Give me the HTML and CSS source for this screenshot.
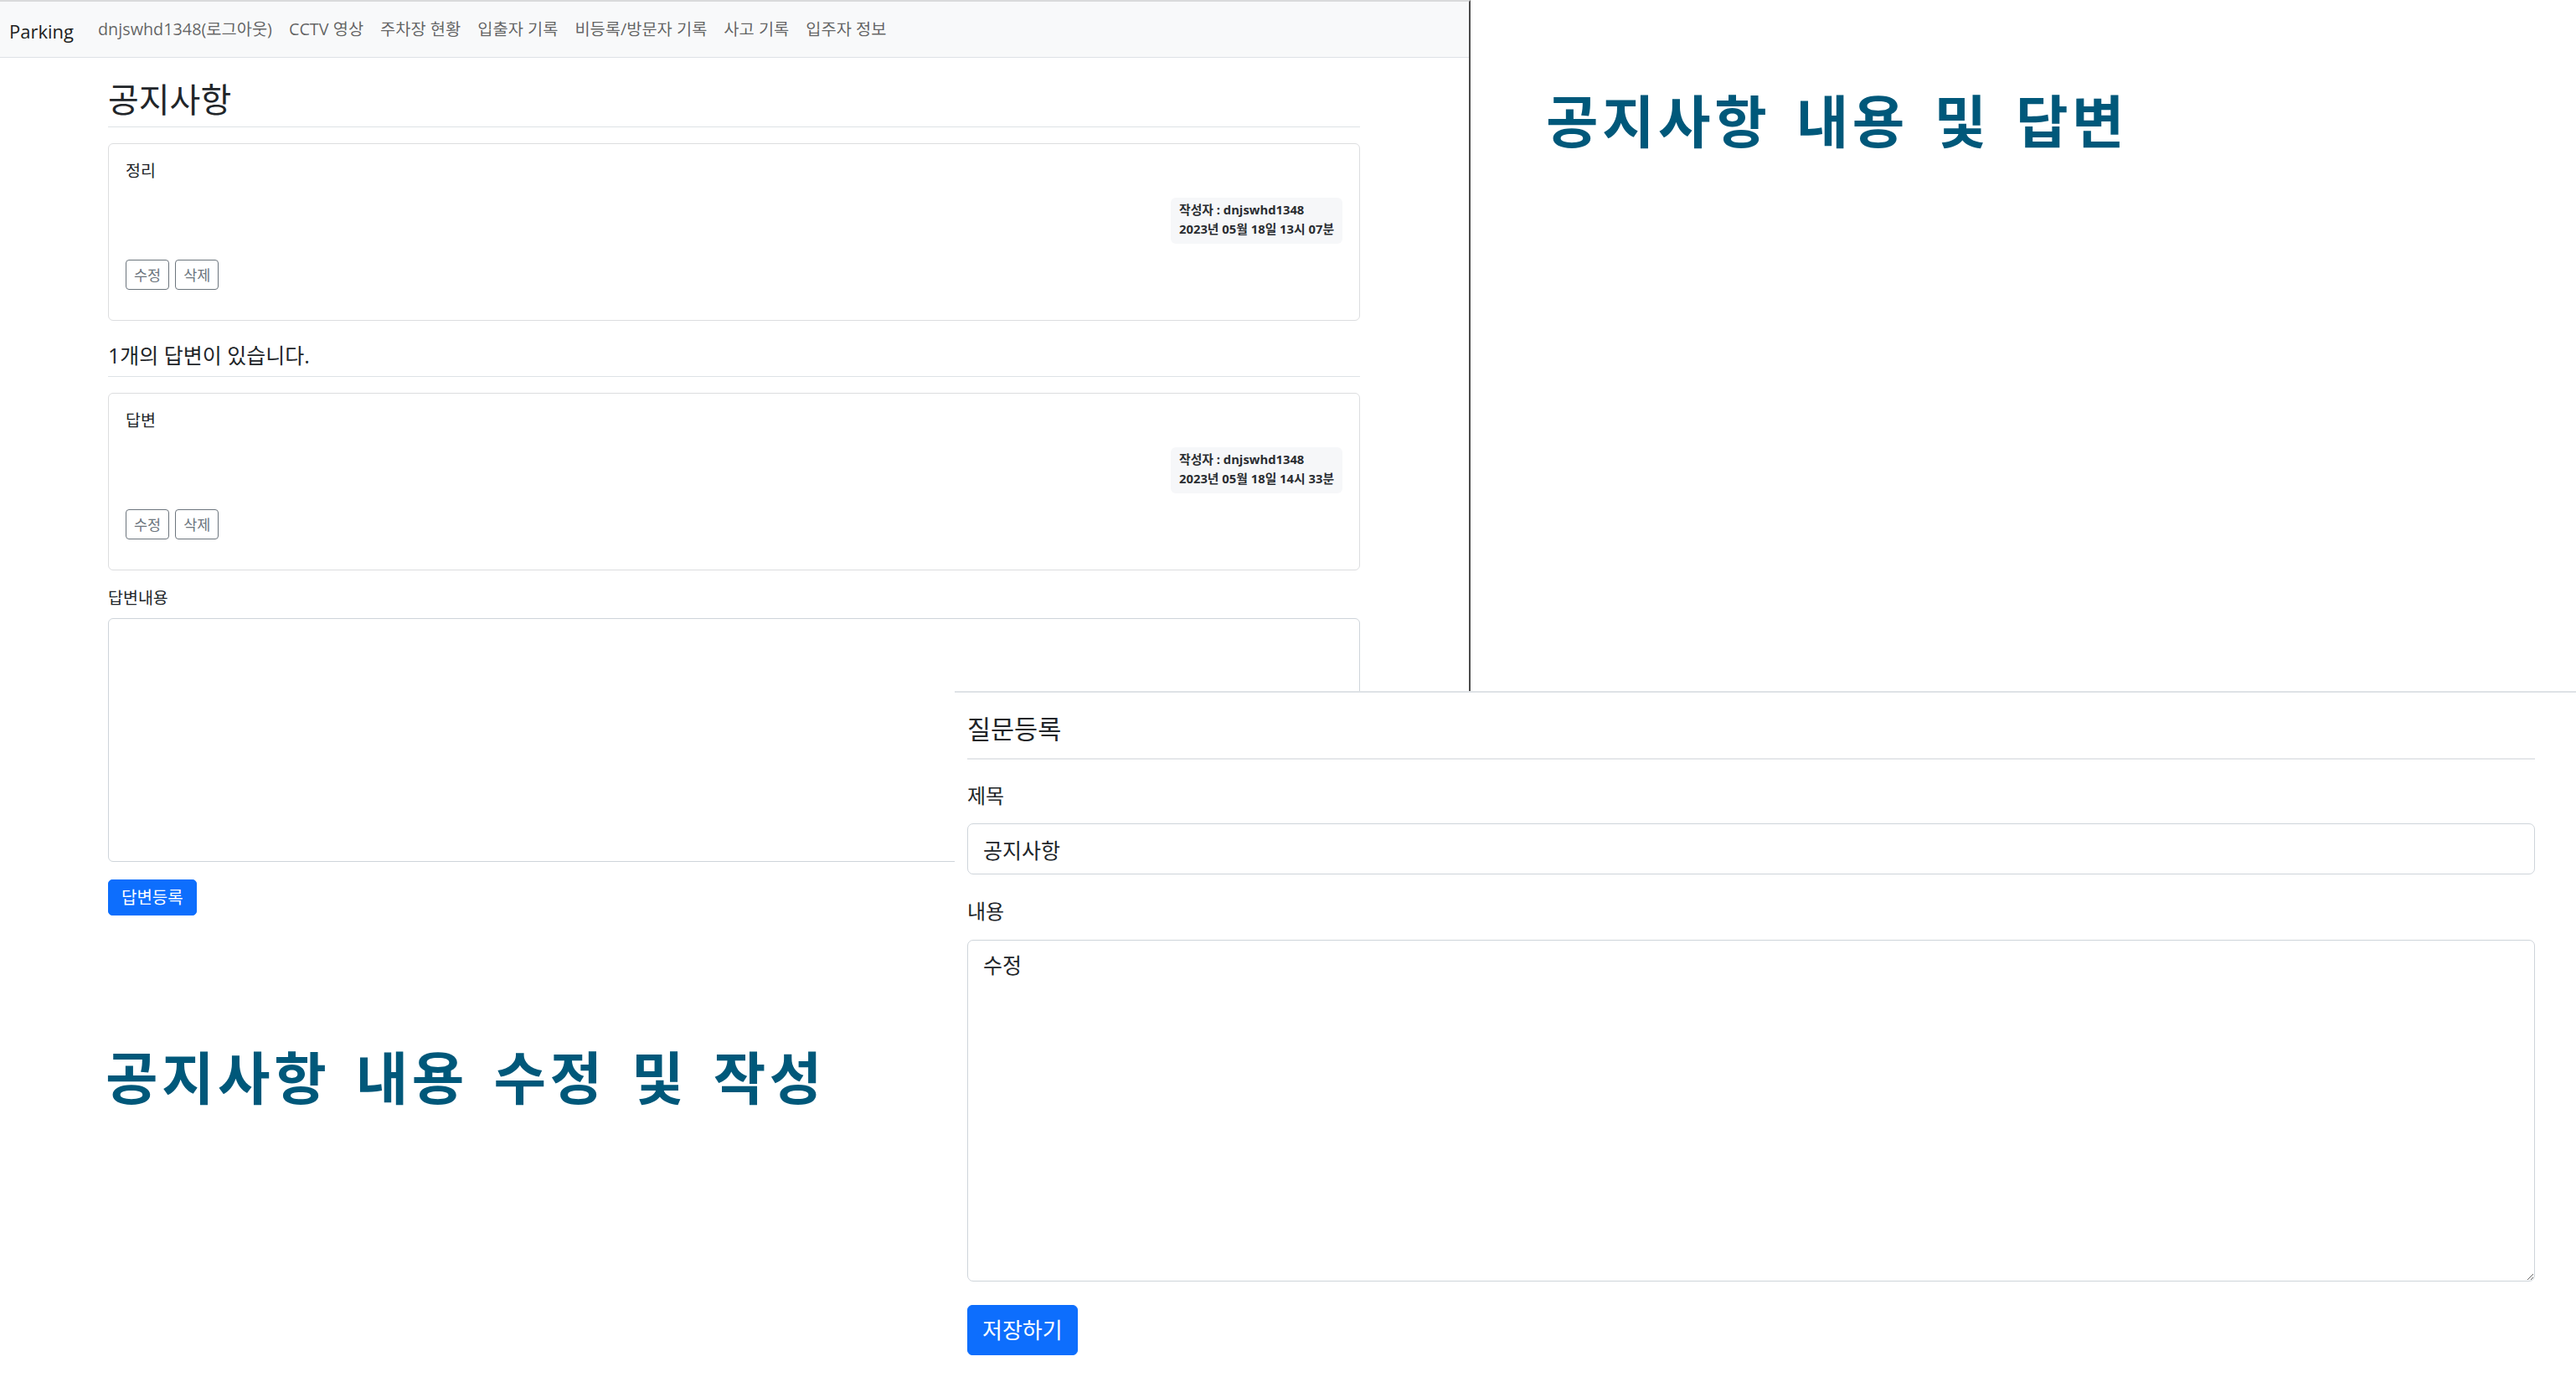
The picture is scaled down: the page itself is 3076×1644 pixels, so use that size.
FILE: index.html
```html
<!DOCTYPE html>
<html lang="ko">
<head>
<meta charset="utf-8">
<title>공지사항</title>
<link rel="stylesheet" href="styles.css">
</head>
<body>
<div class="canvas">
  <section class="win win-detail">
    <nav class="navbar">
      <span class="brand">Parking</span>
      <ul class="nav">
        <li class="nav-link">dnjswhd1348(로그아웃)</li>
        <li class="nav-link">CCTV 영상</li>
        <li class="nav-link">주차장 현황</li>
        <li class="nav-link">입출자 기록</li>
        <li class="nav-link">비등록/방문자 기록</li>
        <li class="nav-link">사고 기록</li>
        <li class="nav-link">입주자 정보</li>
      </ul>
    </nav>
    <div class="container">
      <h2 class="page-title">공지사항</h2>
      <div class="card">
        <div class="card-text">정리</div>
        <div class="meta-row">
          <div class="meta">작성자 : dnjswhd1348<br>2023년 05월 18일 13시 07분</div>
        </div>
        <div class="actions">
          <button class="btn-outline">수정</button>
          <button class="btn-outline">삭제</button>
        </div>
      </div>
      <h5 class="answers-title">1개의 답변이 있습니다.</h5>
      <div class="card">
        <div class="card-text">답변</div>
        <div class="meta-row">
          <div class="meta">작성자 : dnjswhd1348<br>2023년 05월 18일 14시 33분</div>
        </div>
        <div class="actions">
          <button class="btn-outline">수정</button>
          <button class="btn-outline">삭제</button>
        </div>
      </div>
      <label class="label-sm">답변내용</label>
      <textarea class="answer-area"></textarea>
      <button class="btn-primary btn-answer">답변등록</button>
    </div>
  </section>

  <h1 class="caption caption-top">공지사항 내용 및 답변</h1>
  <h1 class="caption caption-bottom">공지사항 내용 수정 및 작성</h1>

  <section class="win win-form">
    <h4 class="form-title">질문등록</h4>
    <label class="form-label">제목</label>
    <input class="form-input" type="text" value="공지사항">
    <label class="form-label form-label-gap">내용</label>
    <textarea class="form-area">수정</textarea>
    <button class="btn-primary btn-save">저장하기</button>
  </section>
</div>
</body>
</html>
```

FILE: styles.css
```css
* {
  box-sizing: border-box;
}

body {
  margin: 0;
  background: #ffffff;
  font-family: "Open Sans", "Noto Sans CJK KR", sans-serif;
  color: #212529;
}

button,
input,
textarea,
label {
  font-family: inherit;
  color: inherit;
}

.canvas {
  position: relative;
  width: 3076px;
  height: 1644px;
  overflow: hidden;
  background: #ffffff;
}

/* windows on the collage canvas */
.win {
  position: absolute;
  background: #ffffff;
}

.win-detail {
  left: 0;
  top: 0;
  width: 1756px;
  height: 825px;
  border-top: 2px solid #d9dadb;
  border-right: 2px solid #4b4b4b;
}

/* navbar */
.navbar {
  display: flex;
  align-items: center;
  height: 67px;
  padding-left: 11px;
  background: #f8f9fa;
  border-bottom: 1px solid #dee2e6;
}

.brand {
  font-family: "Open Sans", sans-serif;
  font-size: 22px;
  line-height: 30px;
  color: #1d1f21;
  padding-top: 3px;
  margin-right: 19px;
}

.nav {
  display: flex;
  margin: 0;
  padding: 0;
  list-style: none;
}

.nav-link {
  padding: 0 10px;
  font-size: 19.8px;
  line-height: 28px;
  color: rgba(0, 0, 0, 0.62);
  white-space: nowrap;
}

/* content */
.container {
  margin-left: 129px;
  width: 1495px;
}

.page-title {
  margin: 28px 0 19px;
  padding-bottom: 10px;
  font-size: 40px;
  line-height: 44px;
  font-weight: 400;
  border-bottom: 1px solid #dee2e6;
}

.card {
  border: 1px solid #dcdddf;
  border-radius: 6px;
  padding: 20px;
}

.card-text {
  font-size: 19.5px;
  line-height: 24px;
}

.meta-row {
  display: flex;
  justify-content: flex-end;
  margin-top: 20px;
}

.meta {
  padding: 3px 10px 6px;
  background: #f6f7f9;
  border-radius: 6px;
  font-size: 14.8px;
  line-height: 23px;
  font-weight: 700;
  color: #2a2d31;
}

.actions {
  display: flex;
  gap: 7px;
  margin-top: 19px;
  margin-bottom: 16px;
}

.btn-outline {
  height: 36px;
  padding: 0 9px;
  border: 1px solid #6c757d;
  border-radius: 4px;
  background: #ffffff;
  color: #6c757d;
  font-size: 17.5px;
  line-height: 34px;
}

.answers-title {
  margin: 26px 0 19px;
  padding-bottom: 10px;
  font-size: 25px;
  line-height: 30px;
  font-weight: 400;
  border-bottom: 1px solid #dee2e6;
}

.label-sm {
  display: block;
  margin-top: 21px;
  font-size: 19.5px;
  line-height: 24px;
}

.answer-area {
  display: block;
  width: 1495px;
  height: 291px;
  margin-top: 12px;
  border: 1px solid #ced4da;
  border-radius: 6px;
  resize: vertical;
}

.btn-primary {
  display: block;
  border: 1px solid #0d6efd;
  background: #0d6efd;
  color: #ffffff;
}

.btn-answer {
  margin-top: 21px;
  height: 43px;
  padding: 0 15px;
  border-radius: 5px;
  font-size: 20px;
  line-height: 41px;
}

/* captions on the canvas */
.caption {
  position: absolute;
  margin: 0;
  font-family: "Noto Sans CJK KR", sans-serif;
  font-weight: 700;
  font-size: 68px;
  line-height: 80px;
  color: #00587a;
  letter-spacing: 4.5px;
  word-spacing: 7px;
  white-space: nowrap;
}

.caption-top {
  left: 1846px;
  top: 102px;
}

.caption-bottom {
  left: 126px;
  top: 1244px;
}

/* lower form window */
.win-form {
  left: 1140px;
  top: 825px;
  width: 1936px;
  height: 819px;
  padding-left: 15px;
  border-top: 2px solid #dee2e6;
}

.form-title {
  width: 1872px;
  margin: 24px 0 0;
  padding-bottom: 16px;
  font-size: 30.5px;
  line-height: 38px;
  font-weight: 400;
  border-bottom: 2px solid #e5e7ea;
}

.form-label {
  display: block;
  margin-top: 28px;
  font-size: 24px;
  line-height: 30px;
}

.form-label-gap {
  margin-top: 29px;
}

.form-input {
  display: block;
  width: 1872px;
  height: 61px;
  margin-top: 18px;
  padding: 0 18px;
  border: 1px solid #ced4da;
  border-radius: 7px;
  font-size: 25px;
  background: #ffffff;
}

.form-area {
  display: block;
  width: 1872px;
  height: 408px;
  margin-top: 19px;
  padding: 12px 18px;
  border: 1px solid #ced4da;
  border-radius: 7px;
  font-size: 25px;
  line-height: 34px;
  resize: vertical;
}

.btn-save {
  margin-top: 28px;
  height: 60px;
  padding: 0 17px;
  border-radius: 6px;
  font-size: 26px;
  line-height: 58px;
}
```
